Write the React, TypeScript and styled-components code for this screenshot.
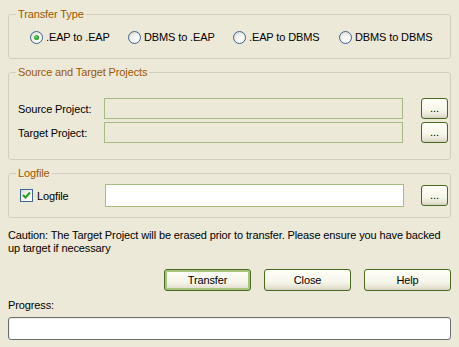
import React from "react";
import styled, {createGlobalStyle, css} from "styled-components";

const GlobalStyle = createGlobalStyle`
  html, body {
    margin: 0;
    padding: 0;
    background: #ECE9D8;
  }

  body {
    font-family: "Liberation Sans", Arial, sans-serif;
    font-size: 11px;
    letter-spacing: -0.12px;
    color: #000000;
  }
`

export const Window = styled.div`
  width: 459px;
  height: 347px;
  box-sizing: border-box;
  padding: 8px;
  display: flex;
  flex-direction: column;
  background: #ECE9D8;
  overflow: hidden;
`

export const Group = styled.fieldset<{top?: number}>`
  margin: ${({top}) => top || 0}px 0 0 0;
  padding: 0;
  border: 1px solid #D0CFBF;
  border-radius: 3px;
  min-width: 0;
`

export const GroupBody = styled.div<{pad: string}>`
  padding: ${({pad}) => pad};
`

export const Legend = styled.legend`
  margin-left: 7px;
  padding: 0 2px;
  line-height: 13px;
  color: #9C5800;
`

export const RadioRow = styled.div`
  display: grid;
  grid-template-columns: 98px 105px 106px auto;
  height: 13px;
  align-items: center;
`

export const RadioItem = styled.label`
  display: flex;
  align-items: center;
  line-height: 13px;
  white-space: nowrap;
`

export const RadioCircle = styled.span<{checked?: boolean}>`
  width: 13px;
  height: 13px;
  box-sizing: border-box;
  border: 1px solid #3D6594;
  border-radius: 50%;
  margin-right: 3px;
  background: radial-gradient(circle at 65% 70%, #FFFFFF 0%, #F4F3EE 45%, #D4D2C8 100%);
  display: flex;
  align-items: center;
  justify-content: center;

  ${({checked}) => checked && css`
    &::after {
      content: "";
      width: 5px;
      height: 5px;
      border-radius: 50%;
      background: radial-gradient(circle at 40% 40%, #6ED36E 0%, #21A121 60%, #1B7F1B 100%);
    }
  `}
`

export const FieldRows = styled.div`
  display: flex;
  flex-direction: column;
  gap: 3px;
`

export const FieldRow = styled.div<{h: number}>`
  display: flex;
  align-items: center;
  height: ${({h}) => h}px;
`

export const FieldLabel = styled.span<{w: number}>`
  width: ${({w}) => w}px;
  flex: none;
  white-space: nowrap;
  display: flex;
  align-items: center;
`

export const TextBox = styled.div<{white?: boolean; h: number}>`
  width: 299px;
  height: ${({h}) => h}px;
  box-sizing: border-box;
  border: 1px solid #A4BC80;
  background: ${({white}) => (white ? "#FFFFFF" : "#ECE9D8")};
`

export const BrowseButton = styled.button`
  margin-left: auto;
  width: 27px;
  height: 21px;
  box-sizing: border-box;
  padding: 0 0 3px 0;
  border: 1px solid #476A20;
  border-radius: 3px;
  background: linear-gradient(#FFFFF8 0%, #F6F5EA 60%, #E8E5D6 85%, #D6D0C2 100%);
  font-family: inherit;
  font-size: 11px;
  color: #000000;
  line-height: 13px;
  display: flex;
  align-items: flex-end;
  justify-content: center;
`

export const CheckBox = styled.span`
  width: 13px;
  height: 13px;
  box-sizing: border-box;
  border: 1px solid #3D6594;
  margin-right: 4px;
  background: linear-gradient(135deg, #DCDBD3 0%, #F4F3EE 50%, #FFFFFF 100%);
  display: flex;
  align-items: center;
  justify-content: center;
`

export const Caution = styled.div`
  margin-top: 11px;
  line-height: 13px;
  white-space: nowrap;
`

export const ButtonRow = styled.div`
  margin-top: 14px;
  display: flex;
  justify-content: flex-end;
  gap: 13px;
`

export const Button = styled.button<{isDefault?: boolean}>`
  width: 87px;
  height: 22px;
  box-sizing: border-box;
  border: 1px solid #476A20;
  border-radius: 3px;
  padding: 0;
  font-family: inherit;
  font-size: 11px;
  letter-spacing: inherit;
  color: #000000;
  background: linear-gradient(#FFFFF8 0%, #F6F5EA 60%, #E8E5D6 85%, #D6D0C2 100%);
  box-shadow: ${({isDefault}) => (isDefault ? "inset 0 0 0 2px #A9C47E" : "none")};
`

export const ProgressLabel = styled.div`
  margin-top: 8px;
  line-height: 13px;
`

export const ProgressBar = styled.div`
  margin-top: 5px;
  height: 23px;
  flex: none;
  box-sizing: border-box;
  border: 1px solid #6E6E6E;
  border-radius: 3px;
  background: #FFFFFF;
  box-shadow: inset 1px 1px 0 #EEEEEE;
`

const Check = () => (
    <svg width="9" height="9" viewBox="0 0 9 9">
        <path d="M1 4 L3.5 6.5 L8 1.5" fill="none" stroke="#21A121" strokeWidth="2"/>
    </svg>
)

const RADIOS = [".EAP to .EAP", "DBMS to .EAP", ".EAP to DBMS", "DBMS to DBMS"]

const App = () => {
    return (
        <>
            <GlobalStyle/>
            <Window>
                <Group>
                    <Legend>Transfer Type</Legend>
                    <GroupBody pad="10px 0 14px 21px">
                        <RadioRow>
                            {RADIOS.map((r, i) =>
                                <RadioItem key={r}>
                                    <RadioCircle checked={i === 0}/>
                                    {r}
                                </RadioItem>
                            )}
                        </RadioRow>
                    </GroupBody>
                </Group>

                <Group top={7}>
                    <Legend>Source and Target Projects</Legend>
                    <GroupBody pad="19px 2px 16px 9px">
                        <FieldRows>
                            <FieldRow h={21}>
                                <FieldLabel w={86}>Source Project:</FieldLabel>
                                <TextBox h={21}/>
                                <BrowseButton>...</BrowseButton>
                            </FieldRow>
                            <FieldRow h={21}>
                                <FieldLabel w={86}>Target Project:</FieldLabel>
                                <TextBox h={21}/>
                                <BrowseButton>...</BrowseButton>
                            </FieldRow>
                        </FieldRows>
                    </GroupBody>
                </Group>

                <Group top={7}>
                    <Legend>Logfile</Legend>
                    <GroupBody pad="4px 2px 10px 11px">
                        <FieldRow h={23}>
                            <FieldLabel w={85}>
                                <CheckBox><Check/></CheckBox>
                                Logfile
                            </FieldLabel>
                            <TextBox white h={23}/>
                            <BrowseButton>...</BrowseButton>
                        </FieldRow>
                    </GroupBody>
                </Group>

                <Caution>
                    Caution: The Target Project will be erased prior to transfer. Please ensure you have backed
                    <br/>
                    up target if necessary
                </Caution>

                <ButtonRow>
                    <Button isDefault>Transfer</Button>
                    <Button>Close</Button>
                    <Button>Help</Button>
                </ButtonRow>

                <ProgressLabel>Progress:</ProgressLabel>
                <ProgressBar/>
            </Window>
        </>
    );
};

export default App;
